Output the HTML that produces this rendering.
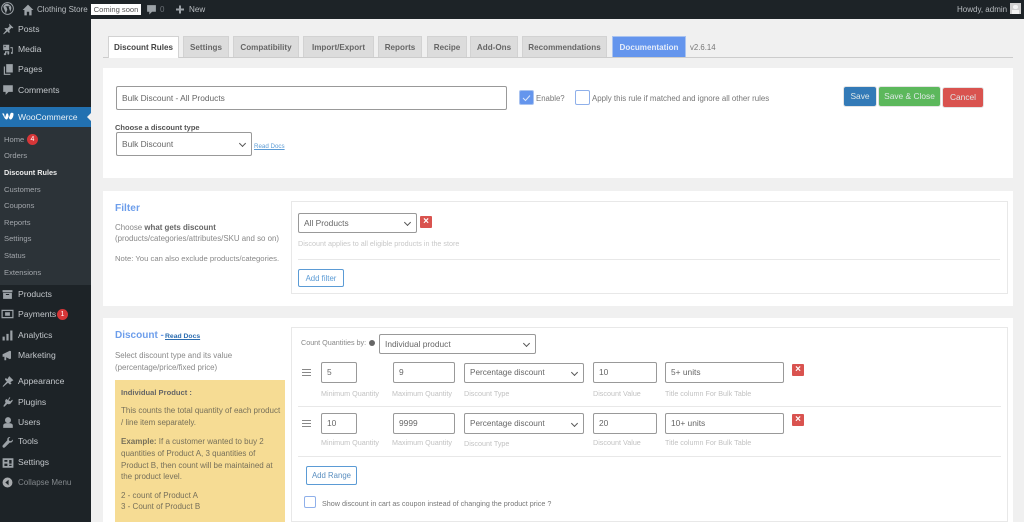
<!DOCTYPE html>
<html lang="en"><head><meta charset="utf-8"><title>Discount Rules</title>
<style>
*{box-sizing:border-box}
html,body{margin:0;padding:0;width:1024px;height:522px;overflow:hidden;background:#f0f0f0}
body{font-family:"Liberation Sans",sans-serif;position:relative;color:#555;filter:blur(.3px)}
.a,.t{position:absolute;white-space:nowrap}
.t{line-height:12px}
.bar{left:0;top:0;width:1024px;height:19px;background:#1d2327}
.side{left:0;top:0;width:91px;height:522px;background:#1d2327}
.m{color:#c3c7cb;font-size:8.600px;left:18px}
.s{color:#a2a6ab;font-size:7.600px;left:4px}
.i{position:absolute;fill:#9ca2a7}
.tab{position:absolute;top:36px;height:21px;background:#dcdcdc;border:1px solid #d2d2d2;border-bottom:0;color:#666;font-weight:700;font-size:8.100px;text-align:center;line-height:21px;white-space:nowrap}
.card{position:absolute;left:103px;width:910px;background:#fff}
.box{position:absolute;background:#fff;border:1px solid #e8e8e8}
.f{position:absolute;background:#fff;border:1px solid #999;border-radius:2px;color:#666;font-size:8.400px;padding-left:5px;white-space:nowrap}
.dd:after{content:"";position:absolute;right:6px;top:50%;width:4px;height:4px;margin-top:-3px;border-right:1px solid #555;border-bottom:1px solid #555;transform:rotate(45deg)}
.l{color:#c2c2c2;font-size:7.200px}
.x{position:absolute;width:12px;height:12px;background:#d9534f;border-radius:1px;color:#fff;font-size:10px;font-weight:700;line-height:12px;text-align:center}
.hr{position:absolute;height:1px;background:#e8e8e8}
.btn{position:absolute;border-radius:3px;color:#dfe8e8;font-size:8.400px;text-align:center;border:1px solid #e4e4e4}
.g{color:#888;font-size:7.900px}
.y{color:#77705a;font-size:8px}
</style></head>
<body>
<div class="a bar"></div>
<div class="a side"></div>
<div class="a" style="left:0;top:107px;width:91px;height:20px;background:#2271b1"></div>
<div class="a" style="left:87px;top:113px;border:4px solid transparent;border-left:0;border-right:4px solid #f0f0f0"></div>
<div class="a" style="left:0;top:127px;width:91px;height:158px;background:#2c3338"></div>

<!-- admin bar -->
<svg class="i" style="left:1px;top:2px" width="13" height="13" viewBox="0 0 20 20"><circle cx="10" cy="10" r="9" fill="none" stroke="#9ca2a7" stroke-width="1.5"/><path d="M3.5 7.5l4 10 2.2-6-1.5-4H7V6.5h6v1h-1.3l2.6 7.5 1.4-4.500c.5-2-.3-3.300-.8-4.500L11 3C7 2 4.500 4.500 3.500 7.500z"/></svg>
<svg class="i" style="left:22px;top:4px" width="12" height="12" viewBox="0 0 20 20"><path d="M10 1L1 10h3v9h4v-6h4v6h4v-9h3z"/></svg>
<span class="t" style="left:37px;top:4px;font-size:8px;color:#b8bcc0">Clothing Store</span>
<div class="a" style="left:91px;top:4px;width:50px;height:11px;background:#fff;color:#555;font-size:7.600px;line-height:11px;text-align:center">Coming soon</div>
<svg class="i" style="left:146px;top:4px" width="11" height="11" viewBox="0 0 20 20"><path d="M2 2h16v12h-7l-5 5v-5H2z"/></svg>
<span class="t" style="left:160px;top:4px;font-size:8px;color:#6d7277">0</span>
<svg class="i" style="left:175px;top:4px" width="10" height="11" viewBox="0 0 20 20"><path d="M8 2h4v6h6v4h-6v6H8v-6H2V8h6z"/></svg>
<span class="t" style="left:189px;top:4px;font-size:8.100px;color:#b8bcc0">New</span>
<span class="t" style="left:957px;top:4px;font-size:8px;color:#b8bcc0">Howdy, admin</span>
<div class="a" style="left:1010px;top:3px;width:11px;height:11px;background:#cfcfcf"></div>
<div class="a" style="left:1013px;top:5px;width:5px;height:4px;border-radius:3px;background:#f2f2f2"></div>
<div class="a" style="left:1012px;top:10px;width:7px;height:4px;background:#f2f2f2"></div>

<!-- menu -->
<svg class="i" style="left:2px;top:23px" width="12" height="12" viewBox="0 0 20 20"><path d="M12 1l7 7-2 1-1-1-4 4c1 2 1 3 0 5l-3-3-6 5-1-1 5-6-3-3c2-1 3-1 5 0l4-4-1-1z"/></svg>
<span class="t m" style="top:23px">Posts</span>
<svg class="i" style="left:2px;top:43px" width="12" height="13" viewBox="0 0 20 20"><path d="M2 2h10v9H2zM4 4v2h2V4zM14 6h4v10c0 2-3 2-3 0s1-2 1.500-2V8H14zM5 13h7v4c0 2-3 2-3 0s1-2 1.500-2H7v3c0 2-4 2-4 0s2-2 2-2z"/></svg>
<span class="t m" style="top:43px">Media</span>
<svg class="i" style="left:2px;top:63px" width="12" height="13" viewBox="0 0 20 20"><path d="M7 1h11v14H7zM3 5h2v12h9v2H3z"/></svg>
<span class="t m" style="top:63px">Pages</span>
<svg class="i" style="left:2px;top:83px" width="12" height="13" viewBox="0 0 20 20"><path d="M2 3h16v11h-7l-5 5v-5H2z"/></svg>
<span class="t m" style="top:84px">Comments</span>
<svg class="a" style="left:2px;top:112px" width="12" height="9" viewBox="0 0 24 16"><path fill="#fff" d="M0 2h4l2 8 3-8h3l2 8 3-8c1-2 6-2 6 1 0 6-3 11-6 11-2 0-3-3-4-6-1 3-2 6-4 6-4 0-6-9-9-12z"/></svg>
<span class="t" style="left:18px;top:111px;font-size:8.600px;color:#e8f0f6">WooCommerce</span>
<span class="t s" style="top:134px">Home</span>
<div class="a" style="left:27px;top:134px;width:11px;height:11px;border-radius:50%;background:#d63638;color:#fff;font-size:7px;line-height:11px;text-align:center">4</div>
<span class="t s" style="top:150px">Orders</span>
<span class="t s" style="top:167px;color:#eee;font-weight:700;font-size:7.300px">Discount Rules</span>
<span class="t s" style="top:184px">Customers</span>
<span class="t s" style="top:200px">Coupons</span>
<span class="t s" style="top:217px">Reports</span>
<span class="t s" style="top:233px">Settings</span>
<span class="t s" style="top:250px">Status</span>
<span class="t s" style="top:267px">Extensions</span>
<svg class="i" style="left:2px;top:289px" width="11" height="11" viewBox="0 0 20 20"><path d="M1 2h18v4H1zM2 7h16v11H2zM7 9v2h6V9z"/></svg>
<span class="t m" style="top:288px">Products</span>
<svg class="i" style="left:1px;top:308px" width="13" height="12" viewBox="0 0 20 20"><path fill-rule="evenodd" d="M0 3h20v14H0zM2 5v10h16V5zM6 7h8v6H6z"/></svg>
<span class="t m" style="top:308px">Payments</span>
<div class="a" style="left:57px;top:309px;width:11px;height:11px;border-radius:50%;background:#d63638;color:#fff;font-size:7px;line-height:11px;text-align:center">1</div>
<svg class="i" style="left:2px;top:330px" width="11" height="11" viewBox="0 0 20 20"><path d="M1 12h4v7H1zM8 7h4v12H8zM15 1h4v18h-4z"/></svg>
<span class="t m" style="top:329px">Analytics</span>
<svg class="i" style="left:2px;top:349px" width="12" height="13" viewBox="0 0 20 20"><path d="M1 8l12-6 2 1v12l-2 1-6-3v5H4v-6H1z"/></svg>
<span class="t m" style="top:349px">Marketing</span>
<svg class="i" style="left:2px;top:375px" width="12" height="13" viewBox="0 0 20 20"><path d="M12 1l7 7-5 3 2 3-3 1-3-3-8 7-1-1 7-8-3-3 1-3 3 2z"/></svg>
<span class="t m" style="top:375px">Appearance</span>
<svg class="i" style="left:2px;top:396px" width="12" height="12" viewBox="0 0 20 20"><path d="M12 2l2 1-3 4 3 2 3-3 1 2-4 5c-2 1-4 1-5 0l-5 5-2-1 4-6c-1-2-1-3 0-5l2-1 2 2z"/></svg>
<span class="t m" style="top:396px">Plugins</span>
<svg class="i" style="left:2px;top:416px" width="12" height="13" viewBox="0 0 20 20"><circle cx="10" cy="6" r="5"/><path d="M2 19v-4c0-3 3-4 8-4s8 1 8 4v4z"/></svg>
<span class="t m" style="top:416px">Users</span>
<svg class="i" style="left:2px;top:436px" width="12" height="13" viewBox="0 0 20 20"><path d="M18 5l-3 3-3-1-1-3 3-3c-3-1-6 2-5 5L1 15c-1 3 2 5 4 3l8-8c3 1 6-2 5-5z"/></svg>
<span class="t m" style="top:435px">Tools</span>
<svg class="i" style="left:2px;top:457px" width="12" height="12" viewBox="0 0 20 20"><path fill-rule="evenodd" d="M1 2h18v16H1zM4 5v3h5V5zM12 5v6h4V5zM4 11v4h5v-4zM12 13v2h4v-2z"/></svg>
<span class="t m" style="top:456px">Settings</span>
<svg class="a" style="left:2px;top:477px" width="11" height="11" viewBox="0 0 20 20"><circle cx="10" cy="10" r="9" fill="#a7aaad"/><path d="M12 5v10l-6-5z" fill="#1d2327"/></svg>
<span class="t" style="left:18px;top:477px;font-size:8px;color:#83888c">Collapse Menu</span>

<!-- tabs -->
<div class="a" style="left:103px;top:57px;width:910px;height:1px;background:#ccc"></div>
<div class="tab" style="left:108px;width:71px;height:22px;background:#fff;color:#444">Discount Rules</div>
<div class="tab" style="left:183px;width:46px">Settings</div>
<div class="tab" style="left:233px;width:66px">Compatibility</div>
<div class="tab" style="left:303px;width:71px">Import/Export</div>
<div class="tab" style="left:378px;width:44px">Reports</div>
<div class="tab" style="left:427px;width:40px">Recipe</div>
<div class="tab" style="left:470px;width:48px">Add-Ons</div>
<div class="tab" style="left:522px;width:85px">Recommendations</div>
<div class="tab" style="left:612px;width:74px;background:#6495ed;border-color:#a9c3f0;color:#e4ecfa">Documentation</div>
<span class="t" style="left:690px;top:42px;font-size:7.800px;color:#777">v2.6.14</span>

<!-- card 1 -->
<div class="card" style="top:68px;height:110px"></div>
<div class="f" style="left:116px;top:86px;width:391px;height:24px;line-height:22px;padding-left:5px">Bulk Discount - All Products</div>
<div class="a" style="left:519px;top:90px;width:15px;height:15px;background:#6495ed;border:1px solid #a9c3f0;border-radius:2px"></div>
<svg class="a" style="left:522px;top:94px" width="9" height="8" viewBox="0 0 9 8"><path d="M1 4l2.500 2.500L8 1.500" fill="none" stroke="#dbe7fb" stroke-width="1"/></svg>
<span class="t" style="left:536px;top:93px;font-size:7.800px;color:#777">Enable?</span>
<div class="a" style="left:575px;top:90px;width:15px;height:15px;background:#fff;border:1px solid #8fb0ea;border-radius:2px"></div>
<span class="t" style="left:592px;top:93px;font-size:7.900px;color:#777">Apply this rule if matched and ignore all other rules</span>
<div class="btn" style="left:843px;top:86px;width:34px;height:21px;background:#337ab7;line-height:19px">Save</div>
<div class="btn" style="left:878px;top:86px;width:63px;height:21px;background:#5cb85c;line-height:19px">Save &amp; Close</div>
<div class="btn" style="left:942px;top:87px;width:42px;height:21px;background:#d9534f;line-height:19px">Cancel</div>
<span class="t" style="left:115px;top:122px;font-size:7.500px;font-weight:700;color:#555">Choose a discount type</span>
<div class="f dd" style="left:116px;top:132px;width:136px;height:24px;line-height:22px">Bulk Discount</div>
<span class="t" style="left:254px;top:141px;font-size:6.200px;color:#5b9bd5;text-decoration:underline">Read Docs</span>

<!-- card 2 -->
<div class="card" style="top:191px;height:115px"></div>
<span class="t" style="left:115px;top:203px;font-size:10.200px;font-weight:700;color:#6d9eeb">Filter</span>
<span class="t g" style="left:115px;top:222px">Choose <b style="color:#666">what gets discount</b></span>
<span class="t g" style="left:115px;top:233px">(products/categories/attributes/SKU and so on)</span>
<span class="t g" style="left:115px;top:253px;font-size:7.700px">Note: You can also exclude products/categories.</span>
<div class="box" style="left:291px;top:201px;width:717px;height:93px"></div>
<div class="f dd" style="left:298px;top:213px;width:119px;height:20px;line-height:18px">All Products</div>
<div class="x" style="left:420px;top:216px">×</div>
<span class="t" style="left:298px;top:238px;font-size:7.200px;color:#c8c8c8">Discount applies to all eligible products in the store</span>
<div class="hr" style="left:298px;top:259px;width:702px"></div>
<div class="a" style="left:298px;top:269px;width:46px;height:18px;border:1px solid #5b9bd5;border-radius:2px;background:#fff;color:#5b9bd5;font-size:7.800px;line-height:17px;text-align:center">Add filter</div>

<!-- card 3 -->
<div class="card" style="top:318px;height:204px"></div>
<span class="t" style="left:115px;top:330px;font-size:10px;font-weight:700;color:#6d9eeb">Discount -</span>
<span class="t" style="left:165px;top:331px;font-size:6.800px;font-weight:700;color:#2b6cb0;text-decoration:underline">Read Docs</span>
<span class="t g" style="left:115px;top:350px">Select discount type and its value</span>
<span class="t g" style="left:115px;top:362px">(percentage/price/fixed price)</span>
<div class="a" style="left:115px;top:380px;width:170px;height:142px;background:#f6dc94"></div>
<span class="t y" style="left:121px;top:387px;font-size:7.600px;font-weight:700;color:#666">Individual Product :</span>
<span class="t y" style="left:121px;top:405px">This counts the total quantity of each product</span>
<span class="t y" style="left:121px;top:417px">/ line item separately.</span>
<span class="t y" style="left:121px;top:436px"><b>Example:</b> If a customer wanted to buy 2</span>
<span class="t y" style="left:121px;top:448px">quantities of Product A, 3 quantities of</span>
<span class="t y" style="left:121px;top:460px">Product B, then count will be maintained at</span>
<span class="t y" style="left:121px;top:471px">the product level.</span>
<span class="t y" style="left:121px;top:490px">2 - count of Product A</span>
<span class="t y" style="left:121px;top:501px">3 - Count of Product B</span>

<div class="box" style="left:291px;top:327px;width:717px;height:195px"></div>
<span class="t" style="left:301px;top:337px;font-size:7.200px;color:#888">Count Quantities by:</span>
<div class="a" style="left:369px;top:340px;width:6px;height:6px;border-radius:50%;background:#666"></div>
<div class="f dd" style="left:379px;top:334px;width:157px;height:20px;line-height:18px">Individual product</div>

<svg class="a" style="left:302px;top:369px" width="9" height="7"><path d="M0 .5h9M0 3.500h9M0 6.500h9" stroke="#888" stroke-width="1"/></svg>
<div class="f" style="left:321px;top:362px;width:36px;height:21px;line-height:19px">5</div>
<div class="f" style="left:393px;top:362px;width:62px;height:21px;line-height:19px">9</div>
<div class="f dd" style="left:464px;top:363px;width:120px;height:20px;line-height:18px;font-size:8.200px">Percentage discount</div>
<div class="f" style="left:593px;top:362px;width:64px;height:21px;line-height:19px">10</div>
<div class="f" style="left:665px;top:362px;width:119px;height:21px;line-height:19px">5+ units</div>
<div class="x" style="left:792px;top:364px">×</div>
<span class="t l" style="left:321px;top:388px">Minimum Quantity</span>
<span class="t l" style="left:392px;top:388px">Maximum Quantity</span>
<span class="t l" style="left:464px;top:388px">Discount Type</span>
<span class="t l" style="left:593px;top:388px">Discount Value</span>
<span class="t l" style="left:665px;top:388px">Title column For Bulk Table</span>
<div class="hr" style="left:298px;top:406px;width:703px"></div>

<svg class="a" style="left:302px;top:420px" width="9" height="7"><path d="M0 .5h9M0 3.500h9M0 6.500h9" stroke="#888" stroke-width="1"/></svg>
<div class="f" style="left:321px;top:413px;width:36px;height:21px;line-height:19px">10</div>
<div class="f" style="left:393px;top:413px;width:62px;height:21px;line-height:19px">9999</div>
<div class="f dd" style="left:464px;top:413px;width:120px;height:21px;line-height:19px;font-size:8.200px">Percentage discount</div>
<div class="f" style="left:593px;top:413px;width:64px;height:21px;line-height:19px">20</div>
<div class="f" style="left:665px;top:413px;width:119px;height:21px;line-height:19px">10+ units</div>
<div class="x" style="left:792px;top:414px">×</div>
<span class="t l" style="left:321px;top:437px">Minimum Quantity</span>
<span class="t l" style="left:392px;top:437px">Maximum Quantity</span>
<span class="t l" style="left:464px;top:438px">Discount Type</span>
<span class="t l" style="left:593px;top:437px">Discount Value</span>
<span class="t l" style="left:665px;top:437px">Title column For Bulk Table</span>
<div class="hr" style="left:298px;top:456px;width:703px"></div>

<div class="a" style="left:306px;top:466px;width:51px;height:19px;border:1px solid #5b9bd5;border-radius:2px;background:#fff;color:#5b8fc0;font-size:7.800px;line-height:17px;text-align:center">Add Range</div>
<div class="a" style="left:304px;top:496px;width:12px;height:12px;border:1px solid #8fb0ea;border-radius:2px;background:#fff"></div>
<span class="t" style="left:322px;top:498px;font-size:7.200px;color:#777">Show discount in cart as coupon instead of changing the product price ?</span>
</body></html>
